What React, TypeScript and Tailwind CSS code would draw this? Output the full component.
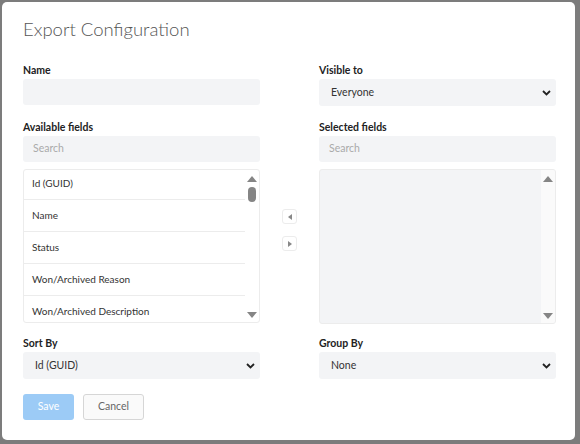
import React from 'react';

const fields = ['Id (GUID)', 'Name', 'Status', 'Won/Archived Reason', 'Won/Archived Description'];

function Chevron() {
  return (
    <svg width="9" height="6" viewBox="0 0 9 6" className="shrink-0">
      <path d="M1 1l3.5 3.5L8 1" fill="none" stroke="#222" strokeWidth="1.8" />
    </svg>
  );
}

function Select({ value }: { value: string }) {
  return (
    <div className="flex h-[27px] items-center justify-between rounded-[3px] bg-[#f3f4f6] pl-[12px] pr-[5px] text-[10.5px] text-[#333]">
      <span>{value}</span>
      <Chevron />
    </div>
  );
}

function SearchBox() {
  return (
    <div className="flex h-[26px] items-center rounded-[3px] bg-[#f3f4f6] px-[10px] text-[10.5px] text-[#aaa]">
      Search
    </div>
  );
}

function Label({ children }: { children: React.ReactNode }) {
  return <div className="mb-[2px] text-[10.5px] font-bold leading-[14px] text-[#222]">{children}</div>;
}

function ScrollTrack({ thumb }: { thumb?: boolean }) {
  return (
    <div className="relative w-[14px] shrink-0">
      <svg width="10" height="6" viewBox="0 0 10 6" className="absolute left-[2px] top-[6px]">
        <path d="M0 6L5 0l5 6z" fill="#858585" />
      </svg>
      {thumb && <div className="absolute left-[3px] top-[17px] h-[15px] w-[8px] rounded-[4px] bg-[#858585]" />}
      <svg width="10" height="6" viewBox="0 0 10 6" className="absolute bottom-[4px] left-[2px]">
        <path d="M0 0l5 6 5-6z" fill="#858585" />
      </svg>
    </div>
  );
}

function ArrowButton({ dir }: { dir: 'left' | 'right' }) {
  return (
    <div className="flex h-[15px] w-[15px] items-center justify-center rounded-[3px] border border-[#ececec] bg-white">
      <svg width="4" height="6" viewBox="0 0 4 6">
        {dir === 'left' ? <path d="M4 0v6L0 3z" fill="#888" /> : <path d="M0 0v6l4-3z" fill="#888" />}
      </svg>
    </div>
  );
}

export default function App() {
  return (
    <div
      className="h-[444px] w-[580px] bg-[#7c7c7c] pb-[4px] pl-[2px] pr-[5px] pt-[2px]"
      style={{ fontFamily: 'Lato, "Open Sans", "Liberation Sans", sans-serif' }}
    >
      <div className="h-full w-full rounded-[5px] bg-white pl-[21px] pr-[18px] pt-[14px]">
        <h1 className="h-[26px] text-[18.5px] font-light leading-[26px] text-[#555]">Export Configuration</h1>

        <div className="mt-[21px] grid grid-cols-[237px_59px_237px]">
          <div>
            <Label>Name</Label>
            <div className="h-[26px] rounded-[3px] bg-[#f3f4f6]" />
          </div>
          <div />
          <div>
            <Label>Visible to</Label>
            <Select value="Everyone" />
          </div>
        </div>

        <div className="mt-[14px] grid grid-cols-[237px_59px_237px]">
          <div>
            <Label>Available fields</Label>
            <SearchBox />
            <div className="mt-[7px] flex h-[154px] overflow-hidden rounded-[3px] border border-[#ececec]">
              <div className="flex-1 overflow-hidden">
                <div className="-mt-[2px]">
                  {fields.map((f) => (
                    <div
                      key={f}
                      className="flex h-[32px] items-center border-b border-[#ececec] pl-[8px] text-[10px] text-[#333]"
                    >
                      {f}
                    </div>
                  ))}
                </div>
              </div>
              <ScrollTrack thumb />
            </div>
          </div>
          <div className="flex flex-col items-center pt-[89px]">
            <ArrowButton dir="left" />
            <div className="h-[12px]" />
            <ArrowButton dir="right" />
          </div>
          <div>
            <Label>Selected fields</Label>
            <SearchBox />
            <div className="mt-[7px] flex h-[155px] overflow-hidden rounded-[3px] border border-[#ececec] bg-[#f3f4f6]">
              <div className="flex-1" />
              <div className="flex bg-[#fafafa]">
                <ScrollTrack />
              </div>
            </div>
          </div>
        </div>

        <div className="mt-[12px] grid grid-cols-[237px_59px_237px]">
          <div>
            <Label>Sort By</Label>
            <Select value="Id (GUID)" />
          </div>
          <div />
          <div>
            <Label>Group By</Label>
            <Select value="None" />
          </div>
        </div>

        <div className="mt-[15px] flex gap-[9px]">
          <button className="h-[26px] w-[51px] rounded-[3px] bg-[#9ccbf6] text-[10.5px] text-white">Save</button>
          <button className="h-[26px] w-[61px] rounded-[3px] border border-[#d6d6d6] bg-[#fafafa] text-[10.5px] text-[#666]">
            Cancel
          </button>
        </div>
      </div>
    </div>
  );
}
